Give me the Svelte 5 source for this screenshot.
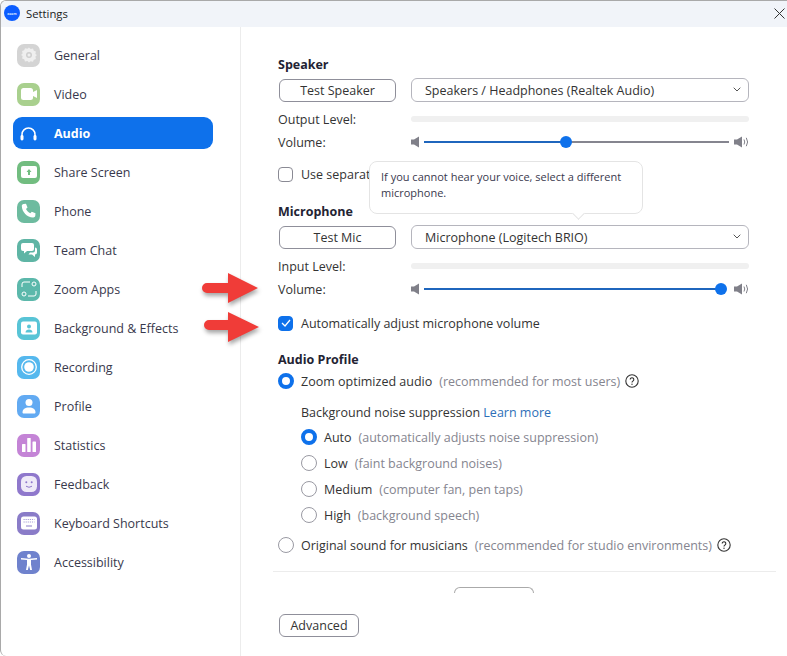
<script>
	const navItems = [
		{ label: 'General', color: '#d4d4d4', icon: 'gear' },
		{ label: 'Video', color: '#a9d08e', icon: 'video' },
		{ label: 'Audio', icon: 'audio', active: true },
		{ label: 'Share Screen', color: '#72bd80', icon: 'share' },
		{ label: 'Phone', color: '#6dbb9f', icon: 'phone' },
		{ label: 'Team Chat', color: '#5fb5a5', icon: 'chat' },
		{ label: 'Zoom Apps', color: '#5cb8ab', icon: 'apps' },
		{ label: 'Background & Effects', color: '#58c4d6', icon: 'background' },
		{ label: 'Recording', color: '#55b8ee', icon: 'recording' },
		{ label: 'Profile', color: '#62aaf2', icon: 'profile' },
		{ label: 'Statistics', color: '#c484d6', icon: 'stats' },
		{ label: 'Feedback', color: '#8f78cc', icon: 'feedback' },
		{ label: 'Keyboard Shortcuts', color: '#8a7cc8', icon: 'keyboard' },
		{ label: 'Accessibility', color: '#6f82cd', icon: 'access' }
	];

	const noiseLevels = [
		{ name: 'Auto', hint: '(automatically adjusts noise suppression)', on: true },
		{ name: 'Low', hint: '(faint background noises)' },
		{ name: 'Medium', hint: '(computer fan, pen taps)' },
		{ name: 'High', hint: '(background speech)' }
	];
</script>

{#snippet speakerLow()}
	<svg class="spk" width="8" height="12" viewBox="0 0 8 12"><path d="M0 3.5h3L8 .5v11l-5-3H0z" fill="#808089" /></svg>
{/snippet}

{#snippet speakerHigh()}
	<svg class="spk" width="15" height="12" viewBox="0 0 15 12">
		<path d="M0 3.5h3L8 .5v11l-5-3H0z" fill="#808089" />
		<path d="M10 3.5q1.5 2.5 0 5M12.3 1.8q2.6 4.2 0 8.4" fill="none" stroke="#808089" stroke-width="1" />
	</svg>
{/snippet}

{#snippet slider(pct)}
	<div class="slider">
		{@render speakerLow()}
		<div class="track-wrap">
			<div class="track" class:max={pct === 100}>
				<div class="fill" style="width: {pct}%"></div>
				<div class="thumb" style="left: {pct}%"></div>
			</div>
		</div>
		{@render speakerHigh()}
	</div>
{/snippet}

{#snippet chevron()}
	<svg class="chev" width="8" height="5" viewBox="0 0 8 5"><path d="M.7.7 4 4 7.3.7" fill="none" stroke="#555" stroke-width="1" /></svg>
{/snippet}

{#snippet help()}
	<svg class="help" width="14" height="14" viewBox="0 0 14 14">
		<circle cx="7" cy="7" r="6.2" fill="none" stroke="#333" stroke-width="1.1" />
		<path d="M5.2 5.5a1.8 1.8 0 1 1 2.7 1.6c-.6.4-.9.7-.9 1.4" fill="none" stroke="#333" stroke-width="1.1" />
		<circle cx="7" cy="10.3" r=".7" fill="#333" />
	</svg>
{/snippet}

{#snippet navIcon(name)}
	<svg width="16" height="16" viewBox="0 0 16 16" fill="#fff">
		{#if name === 'gear'}
			<path d="M8 .5l1.6 1.6 2.4-.5.8 2.1 2.1.8-.5 2.4L16 8l-1.600 1.500.5 2.400-2.100.8-.8 2.100-2.400-.5L8 15.500l-1.600-1.600-2.400.5-.8-2.100-2.100-.8.5-2.400L0 8l1.600-1.500-.5-2.400 2.100-.8.8-2.100 2.400.5z" fill="#efefef" />
			<circle cx="8" cy="8" r="3" fill="#cfcfcf" />
			<circle cx="8" cy="8" r="1.500" fill="#efefef" />
		{:else if name === 'video'}
			<rect x="0" y="2" width="12" height="12" rx="2.5" />
			<path d="M11 6.500 16 4v8l-5-2.500z" />
		{:else if name === 'share'}
			<rect x="0" y="2" width="16" height="12" rx="2" />
			<path d="M8 5 5.500 8H7v3h2V8h1.500z" fill="#72bd80" />
		{:else if name === 'phone'}
			<path d="M2.500 1 5 .8l1.500 3.700-1.500 1.500c.8 1.800 2.500 3.500 4.300 4.300l1.500-1.500 3.700 1.500-.2 2.500c-.2 1-1 1.700-2 1.700C6.500 14.800 1 9.300.8 3c0-1 .7-1.800 1.700-2z" />
		{:else if name === 'chat'}
			<path d="M2 1h9a2 2 0 0 1 2 2v4a2 2 0 0 1-2 2H6L3 11.500V9H2a2 2 0 0 1-2-2V3a2 2 0 0 1 2-2z" />
			<path d="M14 5.500a2 2 0 0 1 2 2v3a2 2 0 0 1-2 2v2.500L11 12.500H7.500L9 10.500h3a2 2 0 0 0 2-2z" />
		{:else if name === 'apps'}
			<g fill="none" stroke="#fff" stroke-width="1">
				<path d="M1 6V3a2 2 0 0 1 2-2h6M15 10v3a2 2 0 0 1-2 2H7" />
				<circle cx="13" cy="3" r="2" />
				<circle cx="3" cy="13" r="2" />
			</g>
		{:else if name === 'background'}
			<rect x="0" y="1.500" width="16" height="13" rx="2" />
			<circle cx="8" cy="6.500" r="2" fill="#58c4d6" />
			<path d="M4.500 12.500c0-2 1.500-3 3.500-3s3.500 1 3.500 3z" fill="#58c4d6" />
		{:else if name === 'recording'}
			<circle cx="8" cy="8" r="7.300" fill="none" stroke="#fff" stroke-width="1.300" />
			<circle cx="8" cy="8" r="4.800" />
		{:else if name === 'profile'}
			<circle cx="8" cy="4.500" r="3.500" />
			<path d="M1.500 14.500c0-3.500 2.500-5 6.500-5s6.500 1.500 6.500 5c0 .5-.5 1-1 1h-11c-.5 0-1-.5-1-1z" />
		{:else if name === 'stats'}
			<rect x="1" y="7" width="3.500" height="8" rx=".6" />
			<rect x="6.200" y="1" width="3.500" height="14" rx=".6" />
			<rect x="11.500" y="4.500" width="3.500" height="10.500" rx=".6" />
		{:else if name === 'feedback'}
			<rect x="0" y="0" width="16" height="16" rx="5.500" fill="#efeaf8" />
			<circle cx="5.300" cy="6.300" r="1" fill="#8f78cc" />
			<circle cx="10.700" cy="6.300" r="1" fill="#8f78cc" />
			<path d="M5 10.200q3 2.200 6 0" fill="none" stroke="#8f78cc" stroke-width="1" />
		{:else if name === 'keyboard'}
			<rect x="0" y="1.500" width="16" height="13" rx="2.500" />
			<path d="M2.500 4.500h11M2.500 7h11" stroke="#a99fd8" stroke-width="1.200" stroke-dasharray="1.200 .9" />
			<path d="M5 11h6" stroke="#8a7cc8" stroke-width="1" />
		{:else if name === 'access'}
			<circle cx="8" cy="2" r="2" />
			<path d="M0 5.500 6 6v4.500L5 16h1.800L8 11.500 9.200 16H11l-1-5.500V6l6-.5V4L8 4.800 0 4z" />
		{/if}
	</svg>
{/snippet}

<div class="window">
	<header class="titlebar">
		<div class="logo"><span>zoom</span></div>
		<span class="title">Settings</span>
		<svg class="close" width="11" height="11" viewBox="0 0 11 11"><path d="M.5.5l10 10M10.500.5l-10 10" stroke="#333" stroke-width="1" /></svg>
	</header>

	<div class="body">
		<nav class="sidebar">
			{#each navItems as item}
				<div class="nav-item" class:active={item.active}>
					{#if item.active}
						<span class="nav-icon">
							<svg width="17" height="15" viewBox="0 0 17 15">
								<path d="M2 12V8.500a6.500 6.500 0 0 1 13 0V12" fill="none" stroke="#fff" stroke-width="1.500" />
								<rect x="0.500" y="9" width="3" height="5.500" rx="1.400" fill="#fff" />
								<rect x="13.500" y="9" width="3" height="5.500" rx="1.400" fill="#fff" />
							</svg>
						</span>
					{:else}
						<span class="nav-icon tile" style="background: {item.color}">
							{@render navIcon(item.icon)}
						</span>
					{/if}
					<span>{item.label}</span>
				</div>
			{/each}
		</nav>

		<main class="content">
			<h3 class="speaker-head">Speaker</h3>
			<div class="device-row">
				<button class="btn test">Test Speaker</button>
				<div class="select">Speakers / Headphones (Realtek Audio){@render chevron()}</div>
			</div>
			<div class="level-row">
				<span>Output Level:</span>
				<div class="level"></div>
			</div>
			<div class="level-row vol">
				<span>Volume:</span>
				{@render slider(46.6)}
			</div>
			<label class="check-row separate">
				<span class="box"></span>
				<span>Use separate audio device to play ringtone simultaneously</span>
			</label>

			<h3 class="mic-head">Microphone</h3>
			<div class="device-row">
				<button class="btn test">Test Mic</button>
				<div class="select">Microphone (Logitech BRIO){@render chevron()}</div>
			</div>
			<div class="level-row">
				<span>Input Level:</span>
				<div class="level"></div>
			</div>
			<div class="level-row vol">
				<span>Volume:</span>
				{@render slider(100)}
			</div>
			<label class="check-row auto">
				<span class="box on">
					<svg width="10" height="8" viewBox="0 0 10 8"><path d="M1 4l3 3 5-6" fill="none" stroke="#fff" stroke-width="1.300" /></svg>
				</span>
				<span>Automatically adjust microphone volume</span>
			</label>

			<h3 class="profile-head">Audio Profile</h3>
			<div class="radio-row">
				<span class="radio on"></span>
				<span>Zoom optimized audio</span>
				<span class="hint">(recommended for most users)</span>
				{@render help()}
			</div>
			<div class="noise">
				<div class="noise-label">Background noise suppression <span class="link">Learn more</span></div>
				{#each noiseLevels as level}
					<div class="radio-row noise-row">
						<span class="radio" class:on={level.on}></span>
						<span>{level.name}</span>
						<span class="hint">{level.hint}</span>
					</div>
				{/each}
			</div>
			<div class="radio-row original">
				<span class="radio"></span>
				<span>Original sound for musicians</span>
				<span class="hint">(recommended for studio environments)</span>
				{@render help()}
			</div>

			<hr class="rule" />
			<div class="cut-btn"></div>
			<button class="btn advanced">Advanced</button>
		</main>
	</div>

	<!-- callout over the speaker section -->
	<div class="tooltip">If you cannot hear your voice, select a different microphone.<span class="tip-arrow"></span></div>

	<!-- annotation arrows -->
	<svg class="arrow arrow-a" width="62" height="38" viewBox="0 0 62 38">
		<path d="M7 13H28V3L58 18 28 33V23H7a5 5 0 0 1 0-10z" fill="#f03c38" />
	</svg>
	<svg class="arrow arrow-b" width="62" height="38" viewBox="0 0 62 38">
		<path d="M9 11H28V3L59 18 28 33V21H9a5 5 0 0 1 0-10z" fill="#f03c38" />
	</svg>
</div>

<style>
	:global(body) {
		margin: 0;
		background: #fff;
	}

	.window {
		position: relative;
		width: 787px;
		height: 656px;
		box-sizing: border-box;
		overflow: hidden;
		border-left: 1px solid #a9a9a9;
		border-top: 1px solid #a9a9a9;
		border-top-left-radius: 6px;
		border-bottom-left-radius: 6px;
		font-family: 'Open Sans', 'Noto Sans', sans-serif;
		font-size: 12.5px;
		color: #333;
		background: #fff;
	}

	.titlebar {
		display: flex;
		align-items: center;
		box-sizing: border-box;
		height: 26px;
		padding: 0 2px 2px 3px;
		background: #f1f4f9;
		font-size: 11.3px;
		color: #222;
	}

	.logo {
		display: flex;
		align-items: center;
		justify-content: center;
		width: 16px;
		height: 16px;
		border-radius: 50%;
		background: #0b5cff;
		margin-right: 6px;
	}

	.logo span {
		font-size: 3.5px;
		font-weight: 700;
		color: #dce8ff;
	}

	.title {
		flex: 1;
	}

	.close {
		flex-shrink: 0;
	}

	.body {
		display: flex;
		height: 629px;
	}

	.sidebar {
		box-sizing: border-box;
		width: 240px;
		padding-top: 12px;
		border-right: 1px solid #ececec;
		flex-shrink: 0;
	}

	.nav-item {
		display: flex;
		align-items: center;
		height: 32px;
		margin: 0 27px 7px 12px;
		padding-left: 4px;
		border-radius: 9px;
		color: #39394d;
	}

	.nav-item.active {
		background: #0e71eb;
		color: #fff;
		font-weight: 700;
	}

	.nav-icon {
		display: flex;
		align-items: center;
		justify-content: center;
		width: 23px;
		height: 23px;
		margin-right: 14px;
		flex-shrink: 0;
	}

	.nav-icon.tile {
		border-radius: 7px;
	}

	.content {
		flex: 1;
		padding: 0 38px 0 37px;
		position: relative;
	}

	h3 {
		margin: 0;
		font-size: 12.5px;
		font-weight: 700;
		color: #232333;
		line-height: 17px;
	}

	.speaker-head {
		margin-top: 29px;
	}

	.mic-head {
		margin-top: 21px;
	}

	.profile-head {
		margin-top: 20px;
		margin-bottom: -1px;
	}

	.device-row {
		display: flex;
		align-items: center;
		gap: 15px;
		margin-top: 5px;
	}

	.btn {
		box-sizing: border-box;
		background: #fff;
		border: 1px solid #8f8f9a;
		border-radius: 6px;
		font: inherit;
		color: #333;
		padding: 0;
	}

	.test {
		width: 117px;
		height: 23px;
		margin-left: 1px;
	}

	.select {
		position: relative;
		box-sizing: border-box;
		flex: 1;
		height: 24px;
		line-height: 24px;
		padding-left: 13px;
		border: 1px solid #b5b5bd;
		border-radius: 6px;
	}

	.chev {
		position: absolute;
		right: 7px;
		top: 8px;
	}

	.level-row {
		display: flex;
		align-items: center;
		height: 17px;
		margin-top: 9px;
	}

	.level-row > span {
		width: 133px;
		flex-shrink: 0;
	}

	.level-row.vol {
		margin-top: 6px;
	}

	.level {
		flex: 1;
		height: 6px;
		border-radius: 3px;
		background: #f0f0f0;
		position: relative;
		top: -1px;
	}

	.slider {
		flex: 1;
		display: flex;
		align-items: center;
		position: relative;
		top: -1px;
	}

	.spk {
		flex-shrink: 0;
	}

	.track-wrap {
		flex: 1;
		margin: 0 5px;
	}

	.track {
		position: relative;
		height: 2px;
		background: #85858f;
	}

	.track.max {
		margin-right: 8px;
	}

	.fill {
		position: absolute;
		left: 0;
		top: 0;
		height: 2px;
		background: #1f66bd;
	}

	.thumb {
		position: absolute;
		top: -5px;
		width: 12px;
		height: 12px;
		margin-left: -6px;
		border-radius: 50%;
		background: #0e71eb;
	}

	.check-row {
		display: flex;
		align-items: center;
		gap: 8px;
		height: 16px;
		white-space: nowrap;
	}

	.separate {
		margin-top: 15px;
	}

	.auto {
		margin-top: 17px;
	}

	.box {
		display: flex;
		align-items: center;
		justify-content: center;
		box-sizing: border-box;
		width: 15px;
		height: 15px;
		border: 1px solid #8a8a94;
		border-radius: 4px;
		flex-shrink: 0;
	}

	.box.on {
		background: #0e71eb;
		border-color: #0e71eb;
	}

	.radio-row {
		display: flex;
		align-items: center;
		height: 16px;
		margin-top: 6px;
		white-space: nowrap;
	}

	.radio-row > span:nth-child(2) {
		margin-left: 7px;
	}

	.hint {
		margin-left: 7px;
		color: #85858f;
	}

	.help {
		margin-left: 5px;
		flex-shrink: 0;
	}

	.radio {
		box-sizing: border-box;
		width: 16px;
		height: 16px;
		border-radius: 50%;
		border: 1px solid #9a9aa3;
		flex-shrink: 0;
		background: #fff;
	}

	.radio.on {
		border: 4px solid #0e71eb;
	}

	.noise {
		padding-left: 23px;
	}

	.noise-label {
		margin-top: 16px;
		margin-bottom: -2px;
		line-height: 16px;
	}

	.link {
		color: #2d6fb8;
	}

	.noise-row {
		margin-top: 10px;
	}

	.original {
		margin-top: 14px;
	}

	.rule {
		margin: 18px -27px 0 -5px;
		border: 0;
		border-top: 1px solid #ececec;
	}

	.cut-btn {
		width: 80px;
		height: 6px;
		margin: 15px 0 0 176px;
		border: 1px solid #aaa;
		border-bottom: 0;
		border-radius: 6px 6px 0 0;
		box-sizing: border-box;
	}

	.advanced {
		display: block;
		width: 80px;
		height: 23px;
		margin: 21px 0 0 1px;
	}

	.tooltip {
		position: absolute;
		left: 368px;
		top: 160px;
		box-sizing: border-box;
		width: 274px;
		height: 53px;
		padding: 7px 8px 8px 11px;
		background: #fff;
		border: 1px solid #e4e4e4;
		border-radius: 8px;
		font-size: 11px;
		line-height: 16px;
		color: #39394d;
	}

	.tip-arrow {
		position: absolute;
		left: 204px;
		bottom: -5px;
		width: 8px;
		height: 8px;
		background: #fff;
		border-right: 1px solid #e4e4e4;
		border-bottom: 1px solid #e4e4e4;
		transform: rotate(45deg);
	}

	.arrow {
		position: absolute;
		left: 199px;
		filter: drop-shadow(1px 3px 2px rgba(0, 0, 0, 0.35));
	}

	.arrow-a {
		top: 269px;
	}

	.arrow-b {
		top: 308px;
	}
</style>
